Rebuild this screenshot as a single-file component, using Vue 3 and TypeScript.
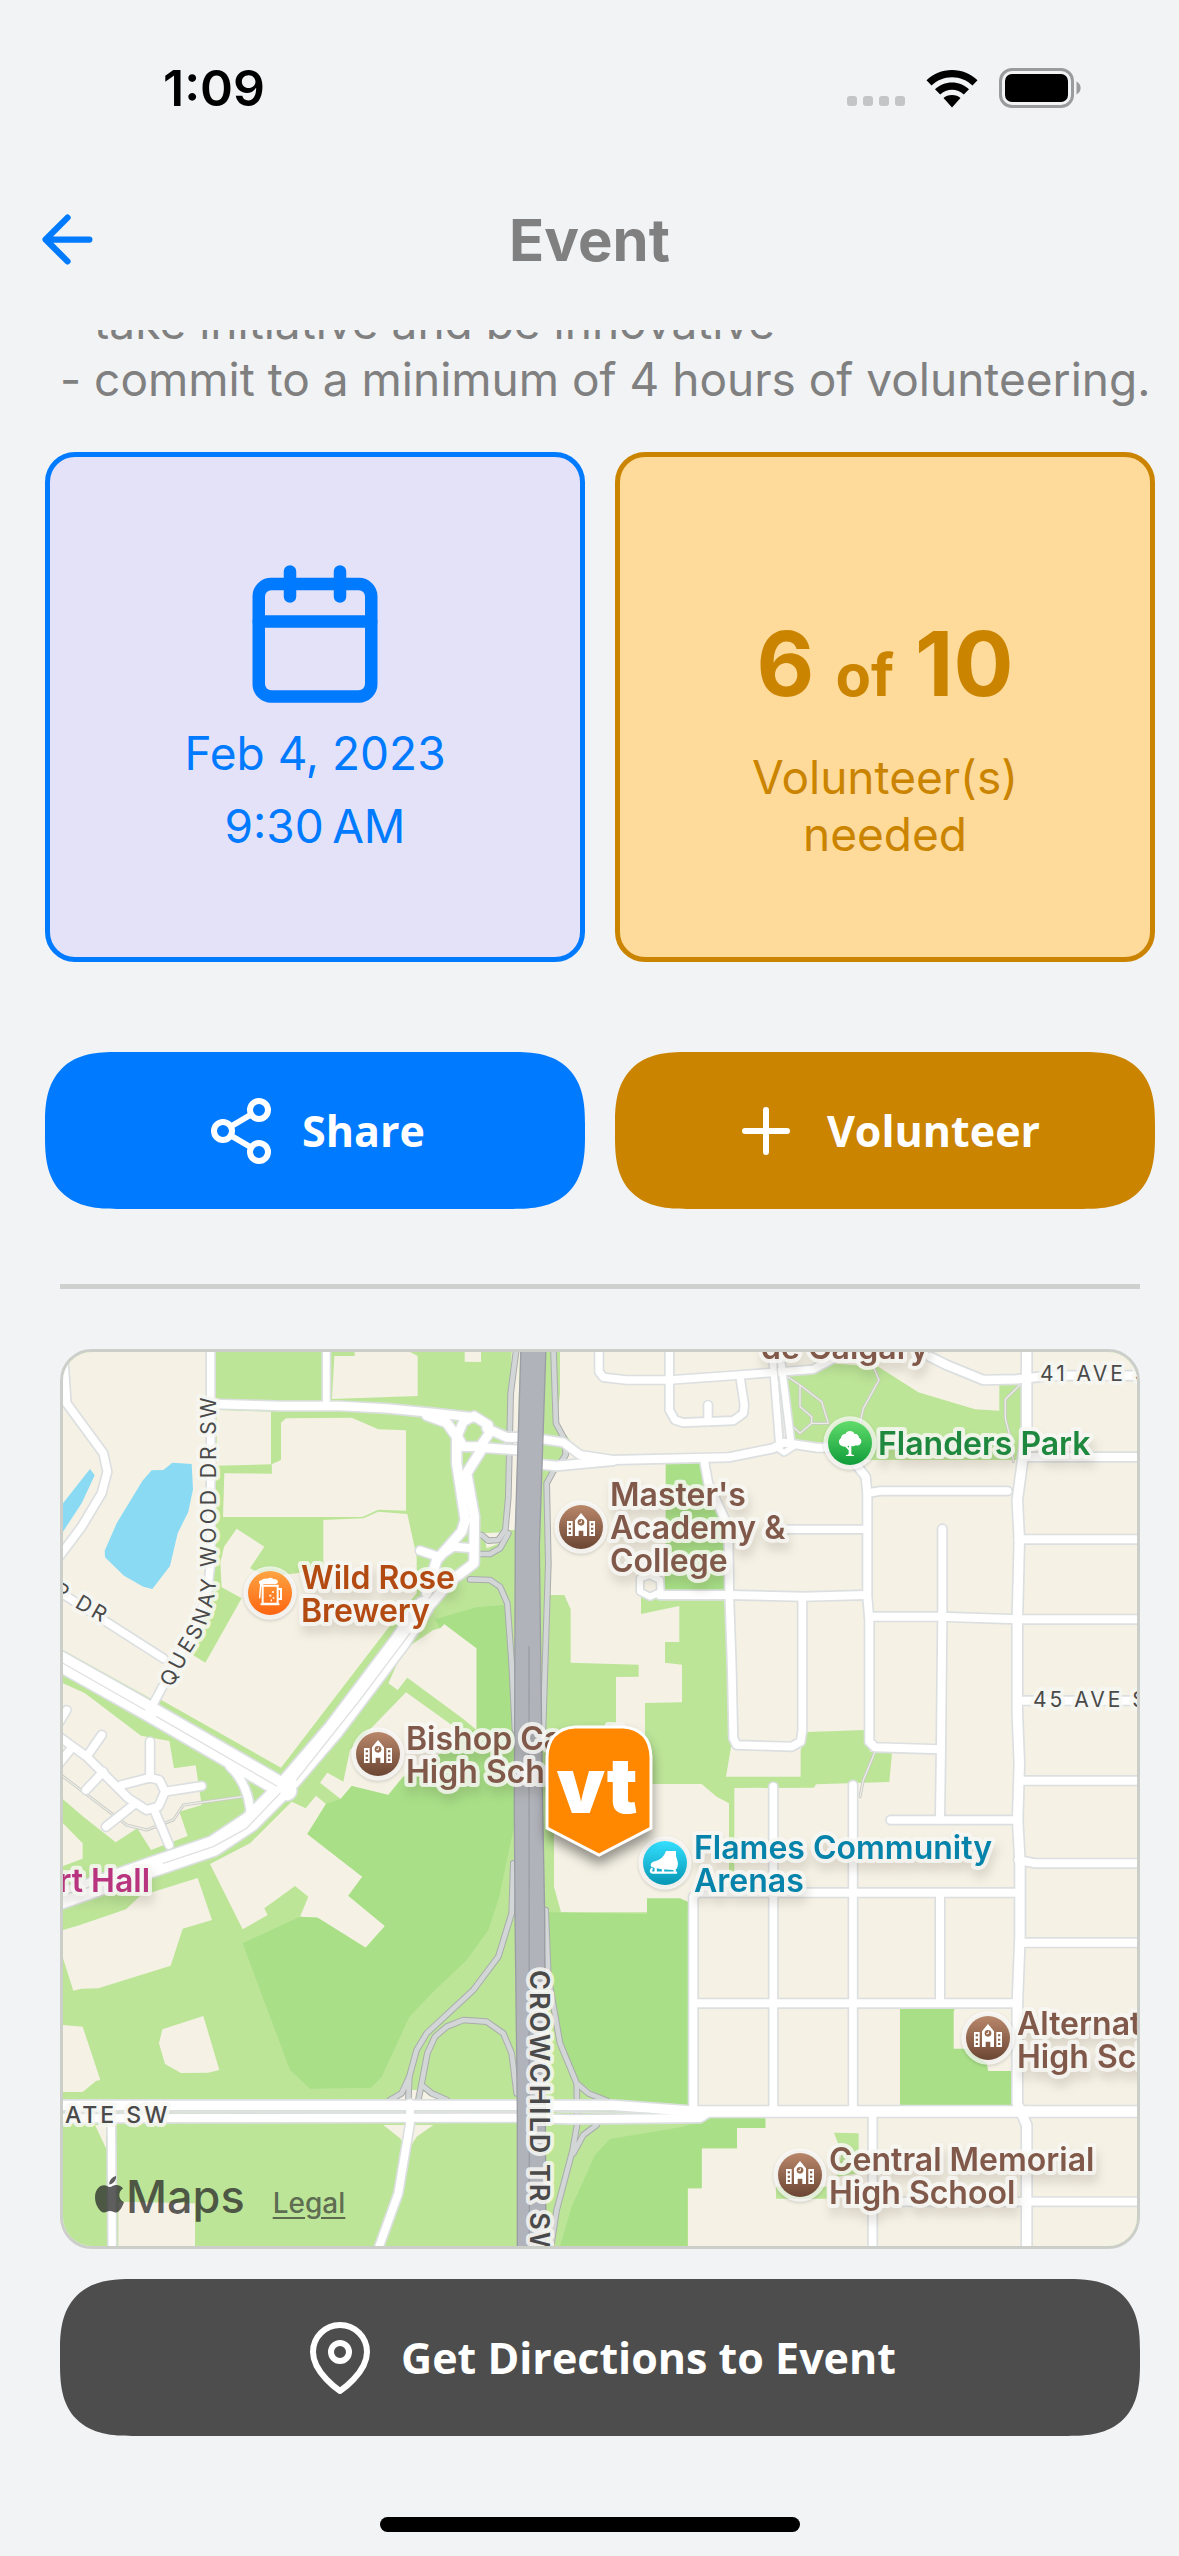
<script setup lang="ts">
interface Road {
  d: string
  w: number
}

interface Label {
  x: number
  y: number
  tone: string
  lines: string[]
}

interface Poi {
  x: number
  y: number
  kind: 'school' | 'beer' | 'tree' | 'skate'
}

const land: string[] = [
  'M0 66H480V760L430 960L310 1110L39 960Z',
  'M853 78H914V66H1080L1103 78V198L846 207Z',
  'M500 240L663 245V403L500 407Z',
  'M693 278L708 265L905 263L985 298L1068 301V542L985 539L937 561H519L523 430L666 431L665 403L693 390Z',
  'M820 570L940 565L985 545L1072 552L1100 680V790L1010 900L693 1313L330 1108L420 970L466 998L575 805L515 772L511 700L522 650L560 596L643 650L600 715L650 740L820 720Z',
  'M1244 66H1293V96L1244 95Z',
  'M1385 66H1410L1396 600H1370Z',
  'M1300 610L1380 605L1350 640L1310 655Z',
  'M1530 66H3261V2748H1914L1500 2300L1485 735L1495 450L1550 400L1560 330L1520 280L1530 190Z',
  'M1170 895L1183 882L1280 955V1200L1240 1167L1072 1043L1043 1080L1015 1060L1060 960L1150 900Z',
  'M1068 1087L1240 1210L1150 1290L1060 1340L1015 1395L905 1368L872 1407L810 1358L832 1328L880 1355L900 1260Z',
  'M480 1602L600 1540L725 1415L767 1435L798 1397L828 1422L772 1512L937 1640L895 1697L1005 1788L947 1853L803 1763L750 1760L775 1700L735 1668L643 1735L653 1755L578 1798Z',
  'M39 1800L90 1785L228 1738L270 1698L443 1644L486 1770L398 1796L362 1907L145 1975L95 1976L70 1982L39 1885Z',
  'M39 2085L98 2090L151 2250L138 2253L98 2286H39Z',
  'M337 2098L460 2058L508 2220L475 2228L393 2229L345 2202L327 2140Z',
  'M39 1480L98 1540V1586L39 1608Z',
  'M39 1060L105 1090L273 1217L358 1233L372 1315L437 1306L455 1425L388 1445L413 1518L303 1560L262 1495L197 1537L100 1460L39 1408Z',
  'M205 2615L435 2620V2748H205Z',
  'M135 2385H168V2455Z',
  'M1000 2385H1150L1100 2420L1075 2460L1050 2425Z',
  'M1020 2310L1060 2280H1110L1180 2308H1600V2325H1010Z',
]

const grass: string[] = [
  'M1470 795H1543L1562 838V998L1766 1004V1040L1698 1041V1500H1512V1670L1533 1747H1930V2340L2146 2365V2394H2061V2455H1955V2575H1914V2748H1440V1200Z',
  'M1773 800V852L1888 828V936H1845V998L1896 1004V1117L1785 1119V1362H1955L2000 1400L2037 1420V1670H2053V1374L2292 1373L2298 1363L2518 1356L2526 1270L2460 1265L2445 1200L2273 1206L2252 1260V1340H2028L2045 1240L2025 780Z',
  'M2205 135L2340 100L2485 110L2605 187L2775 238L2848 242V165L2915 160V390H2460L2230 340Z',
  'M2352 2408L2426 2410V2530L2360 2540L2375 2470Z',
  'M2178 2570H2330V2606H2178Z',
]

const woods: string[] = [
  'M1155 868L1280 832L1363 825L1380 1000L1393 1140L1395 1480L1375 1570L1348 1700L1315 1800L1250 1890L1150 1985L1078 2060L995 2240L963 2273L780 2276L720 2220L578 1840L750 1760L803 1763L947 1853L1005 1788L895 1697L937 1640L772 1512L828 1422L872 1407L905 1368L1015 1395L1060 1340L1150 1290L1240 1200H1280V955L1183 882L1170 895Z',
  'M1847 402L1955 398L2010 560L2035 620V790H1840L1847 700Z',
  'M1490 1747L1791 1752V1705H1890L1920 1718V2325L1670 2310L1580 2250L1535 2140L1500 1940Z',
  'M1680 2427L1900 2390L1970 2365H2146V2394H2061V2455H1955V2575H1912V2748H1530L1565 2630L1635 2475Z',
  'M2550 2035H2715L2711 2045V2156H2750L2810 2200L2815 2223H2885V2328H2550Z',
]

const water: string[] = [
  'M367 398L425 402L429 478L415 545L383 610L360 708L307 777L280 770L222 737L165 682L164 662L200 580L277 453L305 421L340 420Z',
  'M39 520L120 417L134 436L95 520L39 605Z',
]

const trails: string[] = [
  'M20 1325L230 1485L290 1500L370 1470L400 1425L590 1398',
  'M2205 135L2250 165V230L2285 260V280L2250 310L2230 290M2250 165L2315 215L2335 280H2285',
  'M2470 110L2487 150L2440 235L2430 280',
  'M2910 165L2866 208V265L2880 320L2890 395',
  'M2475 1265L2440 1350L2430 1400',
]

const roads: Road[] = [
  { d: 'M39 60L50 220L160 370L172 425L155 490L95 590L20 690', w: 23 },
  { d: 'M482 50V700L470 800L430 900L308 1125', w: 22 },
  { d: 'M829 50V225', w: 20 },
  { d: 'M495 222L690 228H870L1010 235L1140 248L1272 262', w: 25 },
  { d: 'M20 780L340 985', w: 22 },
  { d: 'M50 1140L20 1190', w: 22 },
  { d: 'M155 1215L110 1280M20 1215L110 1280L235 1405L290 1440L325 1430L345 1385L328 1350L300 1343L215 1365', w: 23 },
  { d: 'M300 1235V1345M345 1385L455 1368M160 1325L108 1380M60 1260L20 1310M250 1425L168 1490M315 1445L357 1545', w: 23 },
  { d: 'M540 1310Q600 1365 603 1470', w: 24 },
  { d: 'M1130 256L1190 278L1220 320V400L1246 570L1235 605L1160 690L1130 790', w: 28 },
  { d: 'M1300 350L1250 430L1273 560L1272 700L1200 755L1110 860', w: 28 },
  { d: 'M1110 662L1165 680L1210 650L1270 655', w: 24 },
  { d: 'M1272 258L1315 285L1318 310L1290 350L1240 350L1222 318L1240 275Z', w: 26 },
  { d: 'M1310 295L1370 322H1430', w: 26 },
  { d: 'M1290 352L1430 362', w: 26 },
  { d: 'M1460 325L1540 337L1590 375L1690 390L2035 382L2170 355L2200 338L2300 353H2400', w: 24 },
  { d: 'M1460 402L1520 408L1690 392', w: 26 },
  { d: 'M1647 50V125L1660 142L1730 150H1860L2070 135L2290 118L2400 60', w: 22 },
  { d: 'M1858 50V240L1875 270L1900 278L2050 272L2080 250L2083 225L2070 140', w: 22 },
  { d: 'M1974 225V275', w: 22 },
  { d: 'M2168 80L2188 340M2194 100L2222 330', w: 20 },
  { d: 'M2188 358L2202 368L2230 350', w: 16 },
  { d: 'M2640 80L2690 105L2800 150L2900 148L3000 137H3280', w: 25 },
  { d: 'M1962 390L1975 460L2035 590L2038 800L2045 1000L2050 1225L2060 1245L2225 1250L2252 1235L2257 1200V805', w: 23 },
  { d: 'M1830 795H2038L2260 800L2450 795', w: 24 },
  { d: 'M1800 735L1770 745L1770 785L1800 800L1832 785L1830 750Z', w: 18 },
  { d: 'M2415 400L2447 440L2452 490V800L2458 870V1235L2475 1252L2670 1258', w: 24 },
  { d: 'M2200 598H2452', w: 22 },
  { d: 'M2452 490L2490 483H2873', w: 23 },
  { d: 'M2677 597V860L2673 1250L2670 1465', w: 24 },
  { d: 'M2458 860H2670L2902 868H3280', w: 24 },
  { d: 'M2930 381H3280M2905 628H3280M2902 1112H3280M2908 1352H3280', w: 24 },
  { d: 'M2930 50V300L2902 510L2908 630L2902 870V1150L2908 1300L2903 1470L2910 1600V1820L2902 2020V2320L2930 2385V2770', w: 28 },
  { d: 'M2905 1590L2955 1600H3280M2908 1838H3280', w: 24 },
  { d: 'M2522 1470H2905', w: 23 },
  { d: 'M2170 1370V2345M2409 1365V2345', w: 23 },
  { d: 'M1930 2345V1700L1945 1688H2905M1930 2020H2905M2670 1688V2020', w: 24 },
  { d: 'M2468 2345V2770M2530 2615H3280', w: 23 },
  { d: 'M184 2370L187 2770', w: 22 },
  { d: 'M1080 2320V2380L1045 2590L980 2770', w: 23 },
  { d: 'M20 2326H1690L1920 2343H3280', w: 28 },
  { d: 'M20 2365L1400 2363L1560 2368L1950 2364L1975 2348H3280', w: 24 },
  { d: 'M20 988L300 1145L710 1382', w: 58 },
  { d: 'M0 1718L300 1613L490 1548L600 1475L700 1375L850 1200L1050 935L1120 830', w: 58 },
]

const medians: string[] = [
  'M39 1000L285 1140M320 1160L680 1368',
  'M39 1695L290 1620M340 1600L490 1550L590 1495L690 1390M740 1350L930 1110L1080 910',
  'M39 2346H1060M1095 2346H1400M1520 2346L1800 2350',
  'M2181 110L2202 325',
]

const ramps: string[] = [
  'M1400 50L1382 190L1375 500L1366 600L1345 630L1315 632L1295 615',
  'M1375 610L1350 655L1320 672H1290',
  'M1260 748L1320 750L1350 770L1372 820L1385 1000L1395 1200',
  'M1510 50L1518 280L1545 330L1547 375L1530 400',
  'M1512 420L1490 460L1495 700L1478 1230',
  'M1390 1600L1385 1750L1345 1880L1270 1980L1130 2110L1100 2160L1078 2240L1075 2310M1078 2240L1055 2290L1020 2310',
  'M1400 2290L1385 2170L1360 2110L1310 2075L1240 2070L1190 2090L1155 2120L1132 2170L1115 2260L1105 2310M1115 2265L1145 2290L1190 2310',
  'M1487 1740L1495 1940L1530 2140L1580 2260L1582 2380L1568 2460L1520 2640L1500 2770M1580 2260L1615 2290L1670 2312M1640 2385L1600 2415L1570 2470',
]

const highway = 'M1413 50H1488L1468 650L1478 1440L1484 1750L1486 2340L1488 2770H1402V2340L1395 1750L1393 1440L1396 600Z'

const labels: Label[] = [
  { x: 238, y: 237, tone: 'rust', lines: ['Wild Rose', 'Brewery'] },
  { x: 343, y: 398, tone: 'brown', lines: ['Bishop Carroll', 'High School'] },
  { x: 547, y: 154, tone: 'brown', lines: ["Master's", 'Academy &', 'College'] },
  { x: 698, y: 7, tone: 'brown', lines: ['de Calgary'] },
  { x: 815, y: 103, tone: 'forest', lines: ['Flanders Park'] },
  { x: 631, y: 507, tone: 'teal', lines: ['Flames Community', 'Arenas'] },
  { x: 954, y: 683, tone: 'brown', lines: ['Alternative', 'High School'] },
  { x: 766, y: 819, tone: 'brown', lines: ['Central Memorial', 'High School'] },
]

const pois: Poi[] = [
  { x: 207, y: 241, kind: 'beer' },
  { x: 315, y: 402, kind: 'school' },
  { x: 518, y: 175, kind: 'school' },
  { x: 787, y: 91, kind: 'tree' },
  { x: 602, y: 511, kind: 'skate' },
  { x: 925, y: 686, kind: 'school' },
  { x: 737, y: 823, kind: 'school' },
]
</script>

<template>
  <div class="screen">
    <div class="status">
      <span class="clock">1:09</span>
      <div class="indicators">
        <div class="signal"><i v-for="n in 4" :key="n"></i></div>
        <svg class="wifi" viewBox="0 0 52 38" aria-label="Wi-Fi">
          <path d="M26 0C36 0 45 4 51.500 10.300L46.500 15.600C41 10.300 34 7.300 26 7.300S11 10.300 5.500 15.600L.5 10.300C7 4 16 0 26 0Z" />
          <path d="M26 12.500C32.500 12.500 38.500 15 43 19.200L37.800 24.400C34.600 21.500 30.500 19.800 26 19.800S17.400 21.500 14.200 24.400L9 19.200C13.500 15 19.500 12.500 26 12.500Z" />
          <path d="M26 25C29.500 25 32.500 26.200 34.500 28L26 37.500L17.500 28C19.500 26.200 22.500 25 26 25Z" />
        </svg>
        <svg class="battery" viewBox="0 0 82 40" aria-label="Battery full">
          <rect x="1.500" y="1.500" width="72" height="37" rx="11.500" fill="none" stroke="#9a9b9d" stroke-width="3" />
          <rect x="6" y="6" width="63" height="28" rx="7" />
          <path d="M77.500 13.500C83 16 83 24 77.500 26.500Z" fill="#9a9b9d" />
        </svg>
      </div>
    </div>

    <header class="nav">
      <button class="back" type="button" aria-label="Back">
        <svg viewBox="0 0 24 24"><path d="M19 12H5M12 19L5 12L12 5" /></svg>
      </button>
      <h1>Event</h1>
    </header>

    <main class="content">
      <p class="description">- take initiative and be innovative<br />- commit to a minimum of 4 hours of volunteering.</p>

      <section class="pair">
        <div class="card date">
          <svg class="calendar" viewBox="0 0 24 24">
            <rect x="3" y="4" width="18" height="18" rx="2" />
            <path d="M16 2V6M8 2V6M3 10H21" />
          </svg>
          <p>Feb 4, 2023</p>
          <p>9:30&#8239;AM</p>
        </div>
        <div class="card needed">
          <p class="count">6 <small>of</small> 10</p>
          <p class="caption">Volunteer(s)<br />needed</p>
        </div>
      </section>

      <section class="pair actions">
        <button class="btn share" type="button">
          <svg viewBox="0 0 24 24">
            <circle cx="18" cy="5" r="3" />
            <circle cx="6" cy="12" r="3" />
            <circle cx="18" cy="19" r="3" />
            <path d="M8.590 13.510L15.420 17.490M15.410 6.510L8.590 10.490" />
          </svg>
          Share
        </button>
        <button class="btn volunteer" type="button">
          <svg viewBox="0 0 24 24"><path d="M12 5V19M5 12H19" /></svg>
          Volunteer
        </button>
      </section>

      <hr />

      <section class="map" aria-label="Event location">
        <svg class="tiles" viewBox="0 0 1074 894" preserveAspectRatio="xMidYMid slice">
          <defs>
            <linearGradient id="g-school" x1="0" y1="0" x2="0" y2="1">
              <stop offset="0" stop-color="#b9876a" /><stop offset="1" stop-color="#6b4633" />
            </linearGradient>
            <linearGradient id="g-beer" x1="0" y1="0" x2="0" y2="1">
              <stop offset="0" stop-color="#ffa441" /><stop offset="1" stop-color="#fd6411" />
            </linearGradient>
            <linearGradient id="g-tree" x1="0" y1="0" x2="0" y2="1">
              <stop offset="0" stop-color="#62dc6b" /><stop offset="1" stop-color="#0f9c3a" />
            </linearGradient>
            <linearGradient id="g-skate" x1="0" y1="0" x2="0" y2="1">
              <stop offset="0" stop-color="#34dfff" /><stop offset="1" stop-color="#0696b4" />
            </linearGradient>
            <path id="quesnay" d="M109 336L129 298Q153 262 153 225V0" />
          </defs>

          <g transform="translate(-13 -22) scale(.33333)">
            <rect width="3300" height="2800" fill="#bce598" />
            <path v-for="d in land" :key="d" :d="d" fill="#f5f1e5" />
            <path v-for="d in grass" :key="d" :d="d" fill="#bce598" />
            <path v-for="d in woods" :key="d" :d="d" fill="#a8df87" />
            <path v-for="d in water" :key="d" :d="d" fill="#8adaf4" />
            <g class="line">
              <path v-for="d in trails" :key="d" :d="d" stroke="#c8cbc6" stroke-width="9" />
              <path v-for="d in trails" :key="'i' + d" :d="d" stroke="#ecebe4" stroke-width="4" />
              <path v-for="d in ramps" :key="d" :d="d" stroke="#a9acab" stroke-width="20" />
              <path v-for="d in ramps" :key="'i' + d" :d="d" stroke="#d3d6d6" stroke-width="14" />
              <path v-for="r in roads" :key="r.d" :d="r.d" stroke="#dcdfe0" :stroke-width="r.w + 10" />
              <path v-for="r in roads" :key="'i' + r.d" :d="r.d" stroke="#fff" :stroke-width="r.w" />
              <path v-for="d in medians" :key="d" :d="d" stroke="#dfe2df" stroke-width="4" />
              <path class="highway" :d="highway" stroke="#9b9da4" stroke-width="4" />
              <path d="M1437 950L1438 2770" stroke="#9b9da4" stroke-width="4" />
            </g>
          </g>

          <g class="street">
            <text><textPath href="#quesnay">QUESNAY WOOD DR SW</textPath></text>
            <text transform="translate(-11 242) rotate(30)">P DR</text>
            <text x="977" y="29">41 AVE SW</text>
            <text x="970" y="355">45 AVE SW</text>
            <text class="main-street" x="2" y="771">ATE SW</text>
            <text class="freeway" transform="translate(467 618) rotate(90)">CROWCHILD TR SW</text>
          </g>

          <g class="places">
            <text v-for="l in labels" :key="l.lines[0] + l.x" :class="l.tone">
              <tspan v-for="(line, i) in l.lines" :key="line" :x="l.x" :y="l.y + i * 33">{{ line }}</tspan>
            </text>
            <text class="plum" x="87" y="540" text-anchor="end">rt Hall</text>
          </g>

          <g v-for="p in pois" :key="p.x" class="poi" :transform="`translate(${p.x} ${p.y}) scale(.33333)`">
            <circle r="80" fill="#fff" fill-opacity=".7" />
            <circle r="66" :fill="`url(#g-${p.kind})`" />
            <g v-if="p.kind === 'school'">
              <path fill="#fff" d="M-42-18H-25V27H-42ZM25-18H42V27H25ZM-18 27V-20L0-42L18-20V27H7V11H-7V27Z" />
              <path fill="#86604a" d="M-37-11h7v6h-7zM-37 2h7v6h-7zM-37 15h7v6h-7zM30-11h7v6h-7zM30 2h7v6h-7zM30 15h7v6h-7z" />
              <circle cy="-14" r="10" fill="#96694f" />
              <path d="M1-20V-13H-5" fill="none" stroke="#fff" stroke-width="3" />
            </g>
            <g v-else-if="p.kind === 'beer'" fill="none" stroke="#fff" stroke-width="6">
              <path d="M-22-22H23V32H-22ZM25-12H33V18H25" />
              <path d="M-26 34H26" stroke-linecap="round" />
              <path d="M-30-25Q-38-37-26-38Q-20-46-8-43Q2-49 10-42Q24-42 24-32Q22-25 10-27L-18-27Q-26-24-27-10L-29 15Q-34 20-33 10Z" fill="#fff" stroke="none" />
              <path d="M6-3h6M-2 8h6M8 15h5M2 22h4" stroke-width="5" />
            </g>
            <g v-else-if="p.kind === 'tree'" fill="#fff">
              <path d="M0-36Q10-36 13-28Q26-28 27-16Q37-10 33 0Q28 10 17 7Q8 12 4 8V32Q6 36 12 36V39H-12V36Q-6 36-4 32V22L-14 11Q-28 10-32 2Q-36-8-27-15Q-26-27-13-28Q-10-36 0-36Z" />
              <path d="M-8 9L-3 15V8Z" fill="#2ab14c" />
            </g>
            <g v-else fill="#fff">
              <path d="M3-36H33Q31-22 37-8Q41 6 35 17L24 21L-10 19L-32 14Q-42 14-43 6Q-43-2-30-5Q-5-12 3-36Z" />
              <path d="M-28 14V28M-6 14V28M29 14V28M-40 18Q-46 28-36 29H33" fill="none" stroke="#fff" stroke-width="7" stroke-linecap="round" />
            </g>
          </g>

          <g class="marker">
            <path d="M512 375H560Q587 377 588 405V476L536 503L484 476V405Q485 377 512 375Z" />
            <text x="534" y="461" text-anchor="middle">vt</text>
          </g>
        </svg>

        <div class="attribution">
          <svg viewBox="0 0 29 37">
            <path d="M21 0C21.500 4 18 8.500 14.300 8.500C13.800 4.500 17.500.8 21 0ZM14.800 11C16.500 11 18 9 21.500 9C24 9 26.500 10.300 28 12.500C22.500 16 23.500 24 29 26C27.500 30.500 24.500 36.500 21 36.500C18.500 36.500 17.800 35 15 35S11.300 36.500 9 36.500C5 36.500 0 29 0 21.500C0 13.500 4.500 9.200 9 9.200C11.800 9.200 13.500 11 14.800 11Z" />
          </svg>
          <span>Maps</span>
          <a href="#legal">Legal</a>
        </div>
      </section>

      <button class="btn directions" type="button">
        <svg viewBox="0 0 24 24">
          <path d="M21 10C21 17 12 23 12 23S3 17 3 10A9 9 0 0 1 21 10Z" />
          <circle cx="12" cy="10" r="3" />
        </svg>
        Get Directions to Event
      </button>
    </main>

    <div class="home"></div>
  </div>
</template>

<style>
body {
  background: #f1f3f5;
}
</style>

<style scoped>
.screen {
  box-sizing: border-box;
  display: flex;
  flex-direction: column;
  min-height: 100vh;
  background: #f1f3f5;
  color: #808080;
  font-family: Inter, "Liberation Sans", sans-serif;
}

h1,
p {
  margin: 0;
}

button {
  border: 0;
  font: inherit;
  cursor: pointer;
}

svg {
  flex: none;
}

.status {
  display: flex;
  justify-content: space-between;
  align-items: center;
  height: 176px;
  padding: 0 98px 0 163px;
  box-sizing: border-box;
  color: #000;
}

.clock {
  font-size: 50px;
  font-weight: 600;
}

.indicators {
  display: flex;
  align-items: flex-end;
  gap: 21px;
}

.signal {
  display: flex;
  gap: 6px;
  padding-bottom: 2px;
}

.signal i {
  width: 10px;
  height: 10px;
  border-radius: 3px;
  background: #c4c5c7;
}

.wifi {
  width: 52px;
  height: 38px;
}

.battery {
  width: 82px;
  height: 40px;
}

.nav {
  display: grid;
  grid-template-columns: 1fr auto 1fr;
  align-items: center;
  height: 154px;
  padding: 0 30px 27px;
  box-sizing: border-box;
}

.nav h1 {
  font-size: 58px;
  line-height: 70px;
  font-weight: 700;
}

.back {
  justify-self: start;
  padding: 0;
  background: none;
}

.back svg {
  display: block;
  width: 75px;
  height: 75px;
}

.back path,
.calendar,
.btn svg {
  fill: none;
  stroke: #007aff;
  stroke-width: 2;
  stroke-linecap: round;
  stroke-linejoin: round;
}

.content {
  flex: 1;
  padding: 0 24px 0 45px;
  overflow: hidden;
}

.description {
  margin-top: -36px;
  padding-left: 15px;
  font-size: 46px;
  line-height: 57px;
  white-space: nowrap;
}

.pair {
  display: grid;
  grid-template-columns: 1fr 1fr;
  gap: 30px;
  margin-top: 44px;
}

.card {
  display: flex;
  flex-direction: column;
  align-items: center;
  height: 510px;
  box-sizing: border-box;
  border: 5px solid;
  border-radius: 30px;
  font-size: 46px;
  text-align: center;
}

.date {
  padding-top: 102px;
  background: #e4e2f9;
  color: #007aff;
}

.date p {
  margin-top: 15px;
  line-height: 58px;
}

.calendar {
  width: 150px;
  height: 150px;
}

.needed {
  padding-top: 155px;
  background: #fedb9a;
  color: #cb8400;
}

.count {
  font-size: 89px;
  line-height: 104px;
  font-weight: 700;
}

.count small {
  font-size: 58px;
}

.caption {
  margin-top: 22px;
  line-height: 57px;
}

.actions {
  margin-top: 90px;
}

.btn {
  display: flex;
  align-items: center;
  justify-content: center;
  gap: 25px;
  height: 157px;
  border-radius: 56px;
  color: #fff;
  font-family: "Open Sans", "Noto Sans", sans-serif;
  font-size: 43px;
  font-weight: 700;
}

@supports (corner-shape: squircle) {
  .btn {
    border-radius: 72px;
    corner-shape: superellipse(1.4);
  }
}

.btn svg {
  width: 72px;
  height: 72px;
  stroke: #fff;
}

.share {
  background: #007aff;
}

.volunteer {
  background: #cb8400;
}

hr {
  height: 5px;
  margin: 75px 15px 60px;
  border: 0;
  background: #ced0cd;
}

.map {
  position: relative;
  aspect-ratio: 6 / 5;
  box-sizing: border-box;
  margin: 0 15px;
  border: 3px solid #ccceca;
  border-radius: 32px;
  overflow: hidden;
}

.tiles {
  display: block;
  width: 100%;
  height: 100%;
}

.line path {
  fill: none;
  stroke-linecap: round;
  stroke-linejoin: round;
}

.line .highway {
  fill: #b1b3ba;
}

.tiles text {
  paint-order: stroke;
  stroke: rgba(247, 247, 243, 0.85);
  stroke-width: 8px;
  stroke-linejoin: round;
}

.street text {
  fill: #4a4a4a;
  font-size: 21px;
  letter-spacing: 3px;
}

.street .main-street {
  font-size: 23px;
  font-weight: 500;
}

.street .freeway {
  font-size: 27px;
  font-weight: 600;
  letter-spacing: 2px;
}

.places text {
  font-size: 32px;
  font-weight: 600;
  filter: drop-shadow(2px 8px 5px rgba(60, 50, 30, 0.14));
}

.poi {
  filter: drop-shadow(0 4px 4px rgba(0, 0, 0, 0.2));
}

.brown {
  fill: #81594a;
}

.rust {
  fill: #b24a12;
}

.forest {
  fill: #1f883f;
}

.teal {
  fill: #0583aa;
}

.plum {
  fill: #b8347f;
}

.marker path {
  fill: #ff8800;
  stroke: #fff;
  stroke-width: 3;
  filter: drop-shadow(0 8px 6px rgba(0, 0, 0, 0.4));
}

.tiles .marker text {
  fill: #fff;
  stroke: none;
  font-size: 77px;
  font-weight: 900;
}

.attribution {
  position: absolute;
  left: 32px;
  bottom: 16px;
  display: flex;
  align-items: baseline;
  color: rgba(40, 40, 40, 0.75);
  font-size: 45px;
  line-height: 54px;
  font-weight: 500;
}

.attribution svg {
  width: 29px;
  height: 37px;
  margin-right: 2px;
  fill: currentColor;
}

.attribution a {
  margin-left: 28px;
  color: rgba(40, 40, 40, 0.65);
  font-size: 28px;
  text-underline-offset: 4px;
}

.directions {
  width: calc(100% - 30px);
  margin: 30px 15px 0;
  background: #4d4d4d;
}

.home {
  align-self: center;
  width: 420px;
  height: 15px;
  margin: 24px 0;
  border-radius: 8px;
  background: #000;
}
</style>
